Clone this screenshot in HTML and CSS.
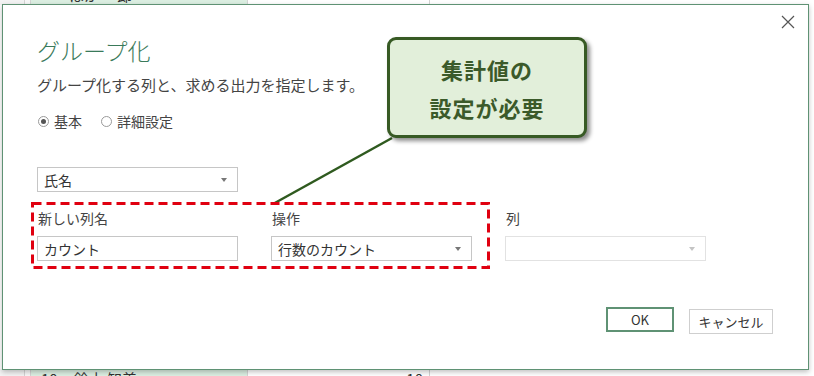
FILE: index.html
```html
<!DOCTYPE html>
<html lang="ja">
<head>
    <meta charset="UTF-8">
    <meta name="viewport" content="width=device-width, initial-scale=1.0">
    <title>グループ化</title>
    <link rel="stylesheet" href="styles.css">
</head>
<body>
    <div class="screen">
        <div class="sheet">
            <div class="sheet-row top-row">
                <div class="cell gutter"></div>
                <div class="cell head"></div>
                <div class="cell name">ほか 一郎</div>
                <div class="cell num"></div>
                <div class="cell rest"></div>
            </div>
            <div class="sheet-fill"></div>
            <div class="sheet-row bottom-row">
                <div class="cell gutter"></div>
                <div class="cell head"></div>
                <div class="cell name"><span class="no">10</span>鈴木 知美</div>
                <div class="cell num">10</div>
                <div class="cell rest"></div>
            </div>
        </div>

        <div class="dialog">
            <button class="close" type="button" aria-label="閉じる">
                <svg width="14" height="14" viewBox="0 0 14 14">
                    <path d="M1 1 L13 13 M13 1 L1 13" stroke="#555" stroke-width="1.2" fill="none"/>
                </svg>
            </button>

            <h1 class="title">グループ化</h1>
            <p class="lead">グループ化する列と、求める出力を指定します。</p>

            <div class="modes">
                <label class="radio"><span class="dot checked"></span>基本</label>
                <label class="radio"><span class="dot"></span>詳細設定</label>
            </div>

            <div class="select key-select">
                <span>氏名</span>
                <span class="caret"></span>
            </div>

            <div class="fields">
                <div class="field">
                    <div class="field-label">新しい列名</div>
                    <div class="textbox">カウント</div>
                </div>
                <div class="field">
                    <div class="field-label">操作</div>
                    <div class="select">
                        <span>行数のカウント</span>
                        <span class="caret"></span>
                    </div>
                </div>
                <div class="field">
                    <div class="field-label">列</div>
                    <div class="select disabled">
                        <span></span>
                        <span class="caret"></span>
                    </div>
                </div>
            </div>

            <div class="footer">
                <button class="btn primary" type="button">OK</button>
                <button class="btn cancel" type="button">キャンセル</button>
            </div>
        </div>

        <!-- annotation layer -->
        <svg class="marks" width="814" height="376" viewBox="0 0 814 376">
            <line x1="273" y1="204" x2="392" y2="138" stroke="#2f5a1f" stroke-width="2.5"/>
            <rect x="32.5" y="203.5" width="456" height="64" fill="none" stroke="#e00010" stroke-width="3" stroke-dasharray="9 5"/>
        </svg>
        <div class="callout">
            <div>集計値の</div>
            <div>設定が必要</div>
        </div>
    </div>
</body>
</html>
```

FILE: styles.css
```css
* {
    box-sizing: border-box;
}
body {
    margin: 0;
    padding: 0;
    font-family: "Noto Sans CJK JP", "Noto Sans", sans-serif;
    background-color: #ffffff;
}
.screen {
    position: relative;
    width: 814px;
    height: 376px;
    overflow: hidden;
}

/* spreadsheet behind the dialog */
.sheet {
    display: flex;
    flex-direction: column;
    height: 376px;
}
.sheet-row {
    display: flex;
    height: 20px;
    font-size: 15px;
    color: #333;
}
.top-row {
    margin-top: -15px;
}
.bottom-row {
    margin-bottom: -13px;
}
.sheet-fill {
    flex: 1;
}
.cell {
    border-right: 1px solid #d4d4d4;
    line-height: 20px;
    white-space: nowrap;
}
.gutter {
    width: 25px;
    background: #f3f3f3;
}
.head {
    width: 6px;
    background: #f7f7f7;
}
.name {
    width: 217px;
    background: #dcefe2;
    padding-left: 38px;
}
.no {
    margin-left: -28px;
    margin-right: 16px;
}
.num {
    width: 182px;
    text-align: right;
    padding-right: 6px;
}
.rest {
    flex: 1;
    border-right: none;
}

/* dialog */
.dialog {
    position: absolute;
    left: 2px;
    top: 4px;
    width: 807px;
    height: 366px;
    background: #ffffff;
    border: 1px solid #5f9274;
    box-shadow: 0 2px 5px rgba(0, 0, 0, 0.25);
    padding: 30px 35px 35px 34px;
    display: flex;
    flex-direction: column;
}
.close {
    position: absolute;
    top: 10px;
    right: 11px;
    width: 16px;
    height: 16px;
    padding: 0;
    border: none;
    background: none;
    display: flex;
}
.title {
    margin: 0;
    font-size: 23px;
    font-weight: 300;
    line-height: 30px;
    color: #3a7a5a;
}
.lead {
    margin: 10px 0 0;
    font-size: 15px;
    line-height: 20px;
    color: #444;
}
.modes {
    display: flex;
    gap: 18px;
    margin-top: 16px;
    font-size: 14px;
    line-height: 20px;
    color: #444;
}
.radio {
    display: flex;
    align-items: center;
    gap: 5px;
}
.dot {
    width: 11px;
    height: 11px;
    border: 1px solid #9a9a9a;
    border-radius: 50%;
    display: flex;
    align-items: center;
    justify-content: center;
    margin-left: 1px;
}
.dot.checked::after {
    content: "";
    width: 5px;
    height: 5px;
    border-radius: 50%;
    background: #555;
}

.select,
.textbox {
    height: 25px;
    border: 1px solid #c6c6c6;
    font-size: 14px;
    color: #333;
    padding: 0 10px 0 6px;
    display: flex;
    align-items: center;
    justify-content: space-between;
    background: #fff;
}
.key-select {
    width: 201px;
    margin-top: 36px;
}
.caret {
    width: 0;
    height: 0;
    border-left: 3.5px solid transparent;
    border-right: 3.5px solid transparent;
    border-top: 4px solid #777;
}
.select.disabled {
    border-color: #e2e2e2;
}
.select.disabled .caret {
    border-top-color: #c4c4c4;
}

.fields {
    display: grid;
    grid-template-columns: 201px 201px 201px;
    column-gap: 33px;
    margin-top: 16px;
}
.field-label {
    font-size: 14px;
    line-height: 20px;
    color: #444;
    margin-bottom: 8px;
    padding-left: 1px;
}

.footer {
    margin-top: auto;
    display: flex;
    justify-content: flex-end;
    align-items: flex-start;
    gap: 15px;
}
.btn {
    height: 25px;
    padding: 0;
    border: 1px solid #cfcfcf;
    background: #fff;
    font-family: "Noto Sans CJK JP", "Noto Sans", sans-serif;
    font-size: 13px;
    color: #333;
}
.btn.primary {
    width: 68px;
    border: 2px solid #5f9274;
}
.btn.cancel {
    width: 84px;
    margin-top: 2px;
}

/* annotation */
.marks {
    position: absolute;
    left: 0;
    top: 0;
}
.callout {
    position: absolute;
    left: 387px;
    top: 37px;
    width: 200px;
    height: 101px;
    background: #e2efda;
    border: 3px solid #375a24;
    border-radius: 9px;
    box-shadow: 3px 3px 4px rgba(0, 0, 0, 0.45);
    display: flex;
    flex-direction: column;
    align-items: center;
    justify-content: center;
    gap: 8px;
    font-size: 22px;
    font-weight: bold;
    line-height: 30px;
    color: #3b5a2a;
    letter-spacing: 1px;
}
```
